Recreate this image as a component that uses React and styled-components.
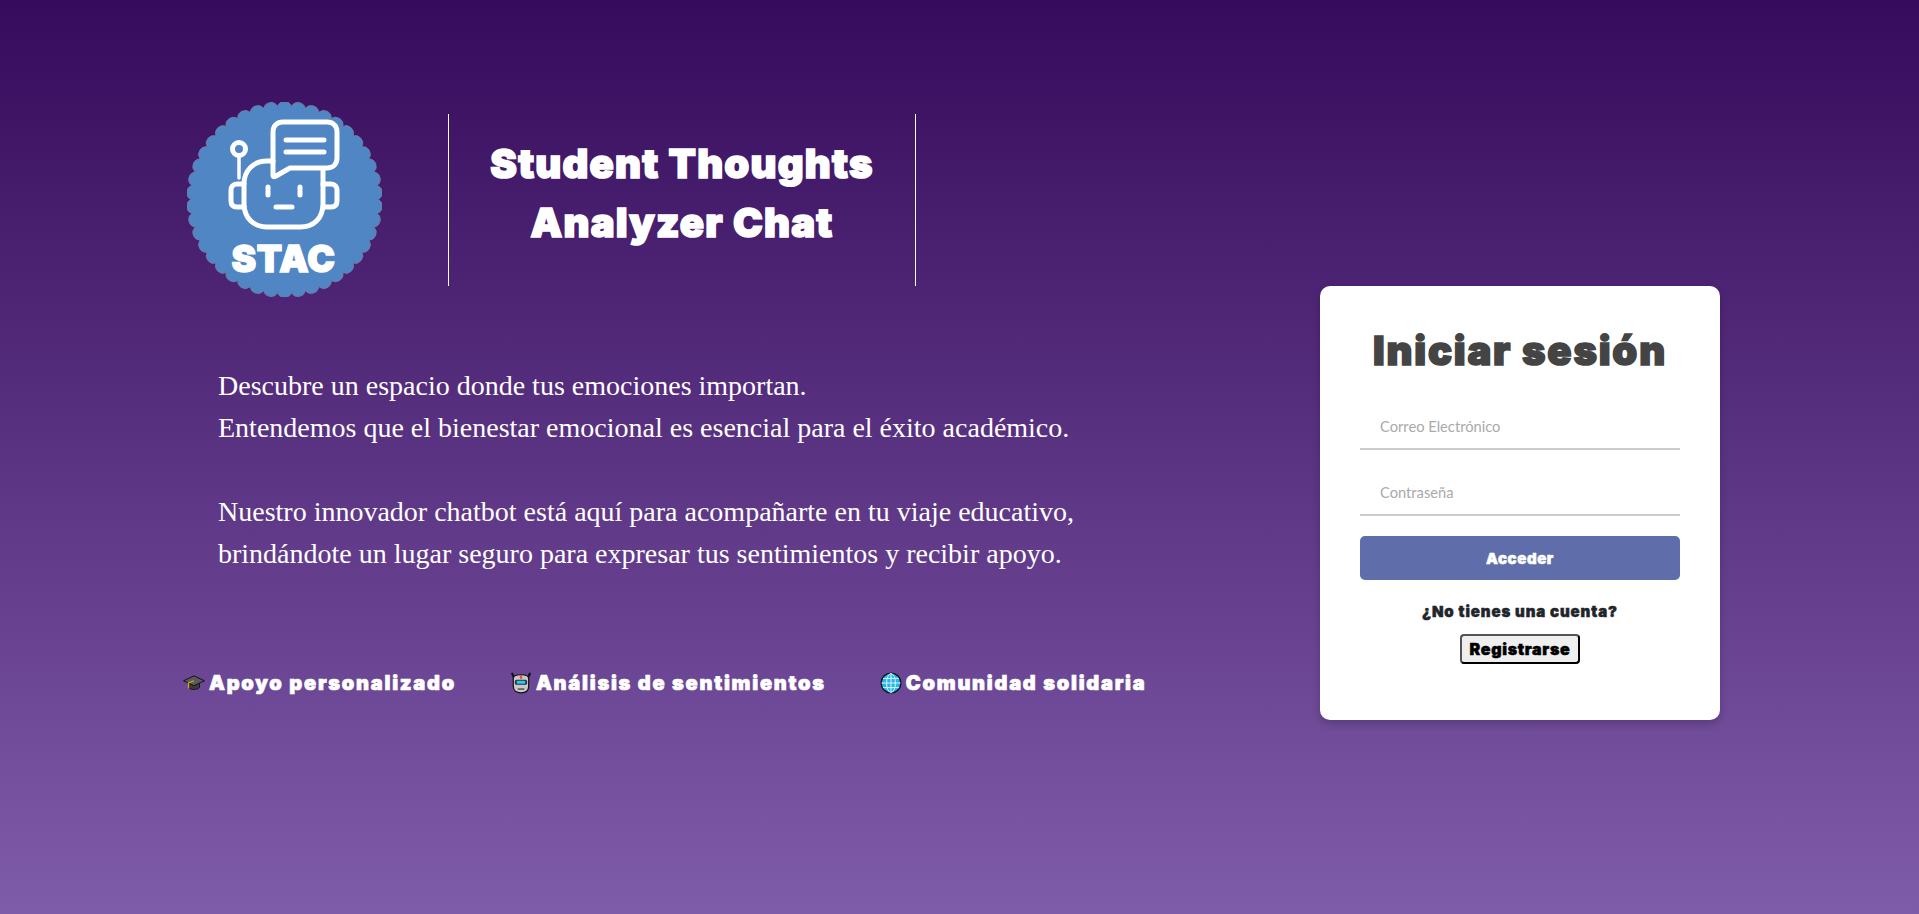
import React from 'react';
import styled, { createGlobalStyle } from 'styled-components';

const DISPLAY = `'Inter', 'Roboto', 'Liberation Sans', sans-serif`;

const GlobalStyle = createGlobalStyle`
    html, body {
        margin: 0;
        padding: 0;
    }
    body {
        background: #7f5ca9;
    }
`;

// scalloped edge of the badge, one bump per step around the circle
const scallopPath = (cx, cy, r, count) => {
    const bump = Math.PI * r / count * 1.08;
    let d = '';
    for (let i = 0; i <= count; i++) {
        const a = (i / count) * Math.PI * 2;
        const x = (cx + r * Math.cos(a)).toFixed(2);
        const y = (cy + r * Math.sin(a)).toFixed(2);
        d += i === 0 ? `M${x} ${y}` : `A${bump.toFixed(2)} ${bump.toFixed(2)} 0 0 1 ${x} ${y}`;
    }
    return d + 'Z';
};

const Logo = () => (
    <LogoSvg viewBox="0 0 195 195">
        <path d={scallopPath(97.5, 97.5, 93.5, 42)} fill="#4f86c3" stroke="#6d7fa8" strokeWidth="1" />
        <g fill="none" stroke="#fff" strokeWidth="5" strokeLinecap="round" strokeLinejoin="round">
            <path d="M86 59 H80 C66 59 57 69 57 82 V102 C57 116 67 125 80 125 H113 C127 125 136 116 136 102 V68" />
            <path d="M86 73 V30 C86 24 90 20 96 20 H140 C146 20 150 24 150 30 V56 C150 62 146 66 140 66 H103 L89 74 C87 75 86 75 86 73 Z" />
            <path d="M99 38 H137 M99 50 H137" />
            <circle cx="52" cy="47" r="6.5" />
            <path d="M52 54 V76" strokeWidth="3.5" />
            <path d="M57 82 H50 C46 82 44 85 44 88 V99 C44 103 46 105 50 105 H57" />
            <path d="M136 82 H144 C148 82 150 85 150 88 V99 C150 103 148 105 144 105 H136" />
            <path d="M81 85 V93 M113 85 V93" />
            <path d="M89 105 H105" />
        </g>
        <LogoText x="96.5" y="170" textAnchor="middle">STAC</LogoText>
    </LogoSvg>
);

const CapIcon = () => (
    <EmojiSvg viewBox="0 0 20 20">
        <path d="M5 9 V14 C7 16.5 13 16.5 15 14 V9 Z" fill="#3b3b3b" stroke="#111" strokeWidth="0.8" />
        <path d="M10 3.5 L19.5 8 L10 12.5 L0.5 8 Z" fill="#5a5a5a" stroke="#111" strokeWidth="0.9" />
        <path d="M10 8 L5 10 V15" fill="none" stroke="#d9a21b" strokeWidth="1.1" />
    </EmojiSvg>
);

const RobotIcon = () => (
    <EmojiSvg viewBox="0 0 20 20">
        <path d="M2 1.5 L4 6 M18 1.5 L16 6" stroke="#111" strokeWidth="2" strokeLinecap="round" />
        <path d="M3 6 C3 3 6 2.5 10 2.5 C14 2.5 17 3 17 6 V13 C17 17 14 19 10 19 C6 19 3 17 3 13 Z" fill="#c9c9c9" stroke="#111" strokeWidth="1.1" />
        <rect x="9" y="2.8" width="2" height="3.4" fill="#e8532b" />
        <rect x="4.5" y="7" width="11" height="4.6" rx="1.4" fill="#20323f" />
        <rect x="6" y="8" width="8" height="2.6" rx="0.8" fill="#35c4ef" />
        <path d="M7 15.5 H13" stroke="#555" strokeWidth="1.4" />
    </EmojiSvg>
);

const GlobeIcon = () => (
    <EmojiSvg viewBox="0 0 20 20">
        <circle cx="10" cy="10" r="9" fill="#27b6e8" stroke="#111" strokeWidth="1.2" />
        <g fill="none" stroke="#d9f4fd" strokeWidth="0.9">
            <ellipse cx="10" cy="10" rx="4" ry="8.6" />
            <path d="M10 1.4 V18.6 M1.4 10 H18.6 M2.8 5.8 H17.2 M2.8 14.2 H17.2" />
        </g>
    </EmojiSvg>
);

const features = [
    { Icon: CapIcon, label: 'Apoyo personalizado' },
    { Icon: RobotIcon, label: 'Análisis de sentimientos' },
    { Icon: GlobeIcon, label: 'Comunidad solidaria' }
];

const App = () => (
    <Page>
        <GlobalStyle />
        <Intro>
            <Hero>
                <Logo />
                <Title>Student Thoughts<br />Analyzer Chat</Title>
            </Hero>
            <Description>
                Descubre un espacio donde tus emociones importan.<br />
                Entendemos que el bienestar emocional es esencial para el éxito académico.<br />
                <br />
                Nuestro innovador chatbot está aquí para acompañarte en tu viaje educativo,<br />
                brindándote un lugar seguro para expresar tus sentimientos y recibir apoyo.
            </Description>
            <Features>
                {features.map(({ Icon, label }) => (
                    <Feature key={label}>
                        <Icon />
                        {label}
                    </Feature>
                ))}
            </Features>
        </Intro>
        <Card>
            <CardTitle>Iniciar sesión</CardTitle>
            <Input type="email" placeholder="Correo Electrónico" />
            <Input type="password" placeholder="Contraseña" />
            <Submit type="button">Acceder</Submit>
            <Question>¿No tienes una cuenta?</Question>
            <Register type="button">Registrarse</Register>
        </Card>
    </Page>
);

const Page = styled.div`
    box-sizing: border-box;
    height: 914px;
    overflow: hidden;
    display: flex;
    align-items: flex-start;
    padding: 102px 0 0 183px;
    background: linear-gradient(180deg, #360a5c 0%, #7f5ca9 100%);
`;

const Intro = styled.div`
    width: 1137px;
    flex-shrink: 0;
`;

const Hero = styled.div`
    display: flex;
    align-items: center;
    padding-left: 4px;
`;

const LogoSvg = styled.svg`
    width: 195px;
    height: 195px;
    flex-shrink: 0;
`;

const LogoText = styled.text`
    font-family: ${DISPLAY};
    font-size: 37px;
    font-weight: 900;
    fill: #fff;
    stroke: #fff;
    stroke-width: 1.4px;
    letter-spacing: 0.5px;
`;

const Title = styled.h1`
    box-sizing: border-box;
    width: 468px;
    height: 172px;
    margin: 0 0 0 66px;
    padding-top: 20px;
    border-left: 1px solid #fff;
    border-right: 1px solid #fff;
    text-align: center;
    font-family: ${DISPLAY};
    font-size: 40px;
    font-weight: 900;
    line-height: 59px;
    letter-spacing: 1.2px;
    -webkit-text-stroke: 1.6px #fff;
    color: #fff;
`;

const Description = styled.p`
    margin: 68px 0 0 35px;
    font-family: 'Liberation Serif', serif;
    font-size: 28px;
    line-height: 42px;
    color: #fff;
`;

const Features = styled.div`
    display: flex;
    gap: 54px;
    margin-top: 96px;
`;

const Feature = styled.div`
    display: flex;
    align-items: center;
    gap: 4px;
    font-family: ${DISPLAY};
    font-size: 20px;
    font-weight: 900;
    letter-spacing: 1.75px;
    -webkit-text-stroke: 0.7px #fff;
    color: #fff;
`;

const EmojiSvg = styled.svg`
    width: 22px;
    height: 22px;
    flex-shrink: 0;
`;

const Card = styled.div`
    box-sizing: border-box;
    width: 400px;
    height: 434px;
    margin-top: 184px;
    padding: 40px;
    display: flex;
    flex-direction: column;
    align-items: center;
    background: #fff;
    border-radius: 10px;
    box-shadow: 0 4px 8px rgba(0, 0, 0, 0.2);
`;

const CardTitle = styled.h2`
    margin: 0 0 28px;
    font-family: ${DISPLAY};
    font-size: 40px;
    line-height: 50px;
    font-weight: 900;
    letter-spacing: 1.8px;
    -webkit-text-stroke: 1.6px #444;
    color: #444;
`;

const Input = styled.input`
    box-sizing: border-box;
    width: 100%;
    height: 46px;
    margin-bottom: 20px;
    padding: 0 20px;
    border: none;
    border-bottom: 2px solid #ccc;
    outline: none;
    background: transparent;
    font-family: 'Lato', sans-serif;
    font-size: 14.7px;

    &::placeholder {
        color: #aaa;
    }
`;

const Submit = styled.button`
    width: 100%;
    height: 44px;
    border: none;
    border-radius: 5px;
    background: #5f6eaa;
    color: #fff;
    font-family: ${DISPLAY};
    font-size: 15px;
    font-weight: 900;
    letter-spacing: 0.6px;
    -webkit-text-stroke: 0.5px #fff;
`;

const Question = styled.p`
    margin: 22px 0 12px;
    font-family: ${DISPLAY};
    font-size: 15px;
    line-height: 20px;
    font-weight: 900;
    letter-spacing: 0.9px;
    -webkit-text-stroke: 0.5px #212529;
    color: #212529;
`;

const Register = styled.button`
    box-sizing: border-box;
    width: 120px;
    height: 30px;
    padding: 0;
    border: 2px outset #000;
    border-radius: 4px;
    background: #efefef;
    color: #000;
    font-family: ${DISPLAY};
    font-size: 16px;
    font-weight: 900;
    letter-spacing: 0.7px;
    -webkit-text-stroke: 0.5px #000;
`;

export default App;
